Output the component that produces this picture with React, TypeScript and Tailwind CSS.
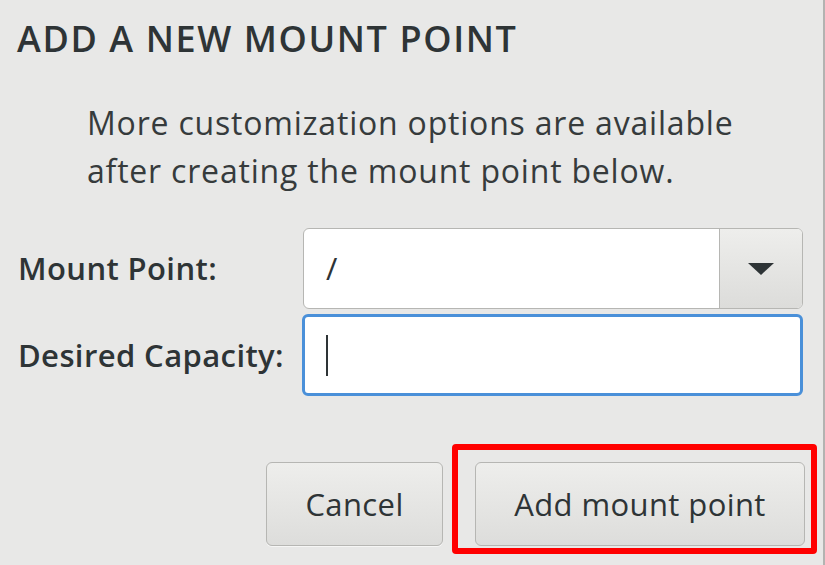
export default function App() {
  return (
    <div
      className="w-[825px] h-[565px] bg-[#e8e8e7] border-r-2 border-[#b3b3b1] text-[#2e3436] flex flex-col"
      style={{ fontFamily: '"Open Sans", "Noto Sans", sans-serif' }}
    >
      {/* title */}
      <h1 className="pl-[17px] pt-[15px] text-[36px] leading-[48px] font-semibold tracking-[1.6px]">
        ADD A NEW MOUNT POINT
      </h1>

      {/* description */}
      <p className="pl-[87px] pt-[36px] text-[32px] leading-[48px] tracking-[0.8px] text-[#363b3c]">
        More customization options are available
        <br />
        after creating the mount point below.
      </p>

      {/* form */}
      <div className="mt-[33px] grid grid-cols-[303px_500px] gap-y-[5px]">
        <label className="pl-[18px] self-center text-[31px] font-semibold tracking-[0.4px]">Mount Point:</label>
        <div className="flex h-[81px] rounded-[6px] border border-[#b6b6b3] bg-white overflow-hidden">
          <div className="flex-1 flex items-center pl-[22px] text-[31px]">/</div>
          <div className="w-[83px] flex items-center justify-center border-l border-[#b6b6b3] bg-gradient-to-b from-[#eeeeec] to-[#dcdcda]">
            <svg width="26" height="14" viewBox="0 0 26 14">
              <path d="M0 1 L26 1 L13 13 Z" fill="#2e3436" />
            </svg>
          </div>
        </div>

        <label className="pl-[18px] self-center text-[31px] font-semibold tracking-[0.4px]">Desired Capacity:</label>
        <div className="flex items-center h-[82px] rounded-[6px] border-[3px] border-[#4a90d9] bg-white -ml-[1px]">
          <span className="ml-[21px] w-[2px] h-[41px] bg-[#2e3436]" />
        </div>
      </div>

      {/* buttons */}
      <div className="mt-[48px] flex items-start">
        <button className="ml-[266px] mt-[18px] w-[177px] h-[84px] rounded-[6px] border border-[#b6b6b3] bg-gradient-to-b from-[#eeeeec] to-[#dddddb] shadow-[0_1px_0_rgba(255,255,255,0.6)] text-[31px] tracking-[0.4px]">
          Cancel
        </button>
        <div className="ml-[9px] pt-[12px] pl-[17px] pr-[6px] pb-[2px] rounded-[4px] border-[6px] border-[#ff0000]">
          <button className="w-[330px] h-[84px] rounded-[6px] border border-[#b6b6b3] bg-gradient-to-b from-[#eeeeec] to-[#dddddb] text-[31px] tracking-[0.4px]">
            Add mount point
          </button>
        </div>
      </div>
    </div>
  );
}
